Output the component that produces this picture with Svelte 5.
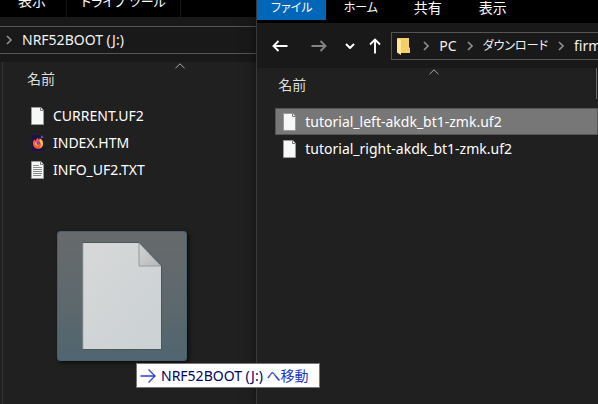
<script>
  const driveFiles = [
    { name: 'CURRENT.UF2', icon: 'blank' },
    { name: 'INDEX.HTM', icon: 'firefox' },
    { name: 'INFO_UF2.TXT', icon: 'text' }
  ];
  const downloads = ['tutorial_left-akdk_bt1-zmk.uf2', 'tutorial_right-akdk_bt1-zmk.uf2'];
  let selected = $state(0);
</script>

{#snippet crumb()}
  <svg class="crumb" width="6" height="10" viewBox="0 0 6 10" aria-hidden="true">
    <path d="M1 1l4 4-4 4" fill="none" stroke="#8c8c8c" stroke-width="1.7" />
  </svg>
{/snippet}

{#snippet sortMark()}
  <svg class="sort" width="10" height="6" viewBox="0 0 10 6" aria-hidden="true">
    <path d="M.5 5.2L5 .8l4.500 4.400" fill="none" stroke="#aaa" />
  </svg>
{/snippet}

{#snippet fileIcon(kind)}
  <svg class="icon" width="16" height="18" viewBox="0 0 16 18" aria-hidden="true">
    {#if kind === 'firefox'}
      <path d="M2 1h9l3 3v13H2z" fill="#20104a" />
      <path d="M11 1l3 3h-3z" fill="#7a4be0" />
      <path d="M3 8.500c.2-1.500.6-2.500 1.300-3.300.2.7.5 1.200 1.100 1.500C6.100 6 6.800 5.300 7 4c1.400.6 1.700 1.600 2.500 2.300.3-.8.2-1.400.1-2 2.300 1 3.600 3 3.400 5.600-.2 3-2.300 4.900-5 4.900-3 0-5.300-2.400-5-6.300z" fill="#ff5a35" />
      <path d="M9.600 4.300c2.300 1 3.600 3 3.400 5.600-.2 2.400-1.700 4.100-3.700 4.700 1.500-1.500 2.100-3.600 1.200-5.700-.5-1.200-1-1.700-1-2.600.3-.8.2-1.400.1-2z" fill="#ffc928" />
      <path d="M5 8.600c1-.5 2-.5 3 .2-.7.100-1.200.5-1.200 1.200 0 .9 1 1.600 2.200 1.200-.8 1.500-4 1.300-4-2.600z" fill="#ffb02e" />
      <circle cx="8.300" cy="9" r="1.800" fill="#7542e5" />
    {:else}
      <path d="M1.500.5h9.300l2.700 2.700v14.300h-12z" fill="#f6f7f7" stroke="#999b9b" />
      <path d="M10.500.8v2.700h2.700" fill="#fff" stroke="#777" />
      {#if kind === 'text'}
        <path d="M3 4.500h6M3 6.500h9M3 8.500h9M3 10.500h9M3 12.500h9M3 14.500h8" stroke="#8a8c8e" fill="none" />
      {/if}
    {/if}
  </svg>
{/snippet}

<main class="desktop">
  <section class="window drive" aria-label="NRF52BOOT (J:)">
    <nav class="ribbon">
      <button class="kanji">表示</button>
      <button class="tools">ドライブ ツール</button>
    </nav>
    <div class="bar">
      <div class="address">
        {@render crumb()}
        <a href="#drive">NRF52BOOT (J:)</a>
      </div>
    </div>
    <div class="content">
      {@render sortMark()}
      <table>
        <thead><tr><th><button>名前</button></th></tr></thead>
        <tbody>
          {#each driveFiles as file}
            <tr><td><div class="file">{@render fileIcon(file.icon)}<span>{file.name}</span></div></td></tr>
          {/each}
        </tbody>
      </table>
    </div>
  </section>

  <section class="window downloads" aria-label="ダウンロード">
    <nav class="ribbon">
      <button class="active">ファイル</button>
      <button>ホーム</button>
      <button class="kanji">共有</button>
      <button class="kanji">表示</button>
    </nav>
    <div class="bar">
      <div class="arrows">
        <button aria-label="戻る">
          <svg width="16" height="12" viewBox="0 0 16 12"><path d="M15.500 6H1.500M6.500 1l-5 5 5 5" fill="none" stroke="#fff" stroke-width="1.900" /></svg>
        </button>
        <button aria-label="進む">
          <svg width="16" height="12" viewBox="0 0 16 12"><path d="M.5 6h14M9.500 1l5 5-5 5" fill="none" stroke="#858585" stroke-width="1.900" /></svg>
        </button>
        <button aria-label="履歴">
          <svg width="10" height="6" viewBox="0 0 10 6"><path d="M1 1l4 4 4-4" fill="none" stroke="#fff" stroke-width="2" /></svg>
        </button>
        <button aria-label="上へ">
          <svg width="12" height="16" viewBox="0 0 12 16"><path d="M6 15.500v-14M1 6.500l5-5 5 5" fill="none" stroke="#fff" stroke-width="1.900" /></svg>
        </button>
      </div>
      <div class="address">
        <svg class="folder" width="13" height="18" viewBox="0 0 13 18" aria-hidden="true">
          <path d="M1 1h11v9.500h1V16H3z" fill="#f3cf68" />
          <path d="M0 1l4 2v15l-4-2.500z" fill="#ffe69a" />
        </svg>
        {@render crumb()}
        <a href="#pc">PC</a>
        {@render crumb()}
        <a class="kana" href="#downloads">ダウンロード</a>
        {@render crumb()}
        <a href="#firmware">firmware</a>
      </div>
    </div>
    <div class="content">
      {@render sortMark()}
      <table>
        <thead><tr><th><button>名前</button></th></tr></thead>
        <tbody>
          {#each downloads as name, i}
            <tr class:selected={selected === i} onclick={() => (selected = i)}>
              <td><div class="file">{@render fileIcon('blank')}<span>{name}</span></div></td>
            </tr>
          {/each}
        </tbody>
      </table>
    </div>
  </section>

  <div class="ghost">
    <svg width="80" height="108" viewBox="0 0 80 108" aria-hidden="true">
      <defs>
        <linearGradient id="sheet" x1="0" y1="0" x2="1" y2="1">
          <stop offset="0" stop-color="#d7d8d8" /><stop offset="1" stop-color="#cbd1d4" />
        </linearGradient>
        <linearGradient id="fold" x1="0" y1="0" x2="1" y2="1">
          <stop offset="0" stop-color="#d3d4d5" /><stop offset="1" stop-color="#b5b8b9" />
        </linearGradient>
      </defs>
      <path d="M.5.5h57l22 23v84H.5z" fill="url(#sheet)" stroke="#4c575b" />
      <path d="M1 1v106" stroke="#a8adaf" />
      <path d="M57 1v23h22z" fill="url(#fold)" stroke="#94999b" />
      <path d="M57.500.5l22 23" stroke="#586064" />
    </svg>
  </div>
  <div class="tip" role="tooltip">
    <svg width="16" height="14" viewBox="0 0 16 14" aria-hidden="true"><path d="M.5 7H15M8.500.5L15 7l-6.500 6.500" fill="none" stroke="#2c43cf" stroke-width="1.300" /></svg>
    <span>NRF52BOOT (J:) <em>へ移動</em></span>
  </div>
</main>

<style>
  :global(body) {
    margin: 0;
    background: #202020;
  }
  .desktop {
    position: relative;
    display: grid;
    grid-template-columns: 3fr 4fr;
    min-height: 100vh;
    overflow: hidden;
    font: 14px/20px "Noto Sans", "Noto Sans CJK JP", sans-serif;
    color: #fff;
  }
  button {
    padding: 0;
    border: 0;
    background: none;
    color: inherit;
    font: inherit;
    white-space: nowrap;
  }
  svg {
    display: block;
    flex: none;
  }
  .window {
    display: flex;
    flex-direction: column;
    min-width: 0;
    overflow: hidden;
    background: #202020;
  }
  .downloads {
    border-left: 1px solid #383838;
    box-shadow: 0 0 12px #0008;
  }
  .ribbon {
    display: flex;
    align-items: flex-end;
    background: #000;
  }
  .ribbon button {
    font-size: 12px;
    line-height: 14px;
    font-feature-settings: "palt";
  }
  .ribbon .kanji {
    font-size: 14px;
  }
  .drive .ribbon {
    height: 17px;
  }
  .drive .ribbon button {
    height: 30px;
    padding: 0 14px 2px;
    border-right: 1px solid #181818;
  }
  .drive .ribbon .kanji {
    padding: 0 20px 2px 18px;
  }
  .drive .ribbon .tools {
    font-size: 13px;
  }
  .downloads .ribbon {
    height: 23px;
    align-items: flex-start;
  }
  .downloads .ribbon button {
    width: 65px;
    height: 20px;
    padding-bottom: 5px;
  }
  .downloads .ribbon button:nth-child(-n + 2) {
    width: 69px;
  }
  .ribbon .active {
    background: #0067b8;
  }
  .bar {
    display: flex;
    align-items: center;
    height: 45px;
    background: #191919;
  }
  .address {
    display: flex;
    flex: 1;
    align-items: center;
    min-width: 0;
    height: 26px;
    border: 1px solid #555;
    border-right: 0;
    white-space: nowrap;
    overflow: hidden;
  }
  .drive .address {
    border-left: 0;
    padding-left: 6px;
    gap: 10px;
  }
  .downloads .address {
    padding-left: 5px;
    gap: 10px;
  }
  .folder {
    margin-right: 3px;
  }
  .address a {
    color: #f2f2f2;
    text-decoration: none;
  }
  .address .kana {
    font-size: 12px;
    font-feature-settings: "palt";
  }
  .arrows {
    display: flex;
    align-items: center;
    gap: 20px;
    padding: 0 10px 0 15px;
  }
  .arrows button:nth-child(1) {
    margin-right: 3px;
  }
  .arrows button:nth-child(2) {
    margin-right: -2px;
  }
  .arrows button:nth-child(4) {
    margin-left: -6px;
  }
  .content {
    position: relative;
    flex: 1;
  }
  .drive .content {
    margin-left: 2px;
    border-left: 1px solid #333;
  }
  .sort {
    position: absolute;
    top: 1px;
    left: 172px;
  }
  table {
    width: 100%;
    border-collapse: collapse;
  }
  th {
    height: 34px;
    padding: 0 0 6px 24px;
    text-align: left;
    font-weight: 400;
    color: #dedede;
  }
  td {
    padding: 0;
  }
  .file {
    display: flex;
    align-items: center;
    gap: 7px;
    height: 27px;
    padding-left: 27px;
  }
  .downloads table {
    width: calc(100% - 18px);
    margin-left: 18px;
  }
  .downloads th {
    padding-left: 3px;
    background: linear-gradient(#666, #666) right 1px top / 1px 31px no-repeat;
  }
  .downloads .file {
    padding-left: 7px;
  }
  .selected {
    background: #777;
    outline: 1px solid #555;
    outline-offset: -1px;
  }
  .ghost {
    position: absolute;
    top: 231px;
    left: 57px;
    display: grid;
    place-items: center;
    width: 128px;
    height: 128px;
    border: 1px solid #48606b;
    border-radius: 3px;
    background: linear-gradient(#676a6b, #5c686d 60%, #506570);
    box-shadow: 2px 2px 4px #0009;
  }
  .tip {
    position: absolute;
    top: 363px;
    left: 136px;
    display: flex;
    align-items: center;
    gap: 5px;
    height: 23px;
    padding: 0 11px 0 3px;
    border: 1px solid #767676;
    background: #fff;
    color: #000066;
    white-space: nowrap;
  }
  .tip em {
    color: #2238c4;
    font-style: normal;
  }
</style>
